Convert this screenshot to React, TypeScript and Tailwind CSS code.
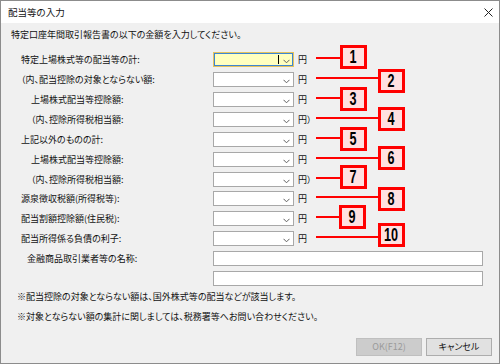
import React from "react";

const FONT = "[font-family:'Noto_Sans_CJK_JP','Noto_Sans',sans-serif] [font-feature-settings:'palt']";

type Row = { label: string; indent: 0 | 1; unit: string; h: string };

const rows: Row[] = [
  { label: "特定上場株式等の配当等の計:", indent: 0, unit: "円", h: "h-[20px]" },
  { label: "（内、配当控除の対象とならない額:", indent: 0, unit: "円", h: "h-[20px]" },
  { label: "上場株式配当等控除額:", indent: 1, unit: "円", h: "h-[20px]" },
  { label: "（内、控除所得税相当額:", indent: 1, unit: "円）", h: "h-[20px]" },
  { label: "上記以外のものの計:", indent: 0, unit: "円", h: "h-[20px]" },
  { label: "上場株式配当等控除額:", indent: 1, unit: "円", h: "h-[20px]" },
  { label: "（内、控除所得税相当額:", indent: 1, unit: "円）", h: "h-[19px]" },
  { label: "源泉徴収税額(所得税等):", indent: 0, unit: "円", h: "h-[20px]" },
  { label: "配当割額控除額(住民税):", indent: 0, unit: "円", h: "h-[20px]" },
  { label: "配当所得係る負債の利子:", indent: 0, unit: "円", h: "h-[20px]" },
];

const rowTops = [52, 72, 92, 112, 132, 152, 172, 191, 211, 231];
const boxes = [
  { n: "1", x: 340, y: 45 },
  { n: "2", x: 378, y: 69 },
  { n: "3", x: 340, y: 87 },
  { n: "4", x: 378, y: 107 },
  { n: "5", x: 340, y: 127 },
  { n: "6", x: 378, y: 146 },
  { n: "7", x: 340, y: 165 },
  { n: "8", x: 378, y: 187 },
  { n: "9", x: 339, y: 205 },
  { n: "10", x: 378, y: 223 },
];

function Chevron() {
  return (
    <svg width="7" height="5" viewBox="0 0 7 5" className="absolute right-[3px] top-[6px]">
      <polyline points="0.5,0.8 3.5,3.8 6.5,0.8" fill="none" stroke="#606060" strokeWidth="1" />
    </svg>
  );
}

function Combo({ focused }: { focused?: boolean }) {
  if (focused) {
    return (
      <div className="relative w-[81px] h-[15px] bg-[#ffffc0] border border-[#e6c35c] shadow-[inset_0_0_0_1px_#3d86d4]">
        <div className="absolute left-[64px] top-[2px] w-px h-[9px] bg-black" />
        <Chevron />
      </div>
    );
  }
  return (
    <div className="relative w-[81px] h-[15px] bg-white border border-[#a8a8a8]">
      <Chevron />
    </div>
  );
}

export default function App() {
  return (
    <div className={`relative w-[500px] h-[364px] ${FONT} text-[9px] text-[#111]`}>
      <div className="w-[500px] h-[364px] flex flex-col border border-[#8c8c8c] bg-white">
        {/* title bar */}
        <div className="h-[22px] flex items-center justify-between pl-[7px] pr-[6px] bg-white">
          <span className="text-[9.5px] leading-[14px]">配当等の入力</span>
          <svg width="9" height="9" viewBox="0 0 9 9">
            <line x1="0.5" y1="0.5" x2="8.5" y2="8.5" stroke="#222" strokeWidth="1" />
            <line x1="8.5" y1="0.5" x2="0.5" y2="8.5" stroke="#222" strokeWidth="1" />
          </svg>
        </div>
        {/* body */}
        <div className="flex-1 flex flex-col bg-[#f0f0f0] pl-[10px] pr-[7px] pt-[5px] pb-[7px]">
          <div className="leading-[14px] h-[14px]">特定口座年間取引報告書の以下の金額を入力してください。</div>
          <div className="mt-[10px] flex flex-col">
            {rows.map((r, i) => (
              <div key={i} className={`flex items-start ${r.h}`}>
                <div className={`w-[202px] leading-[15px] ${r.indent === 1 ? "pl-[20px]" : "pl-[10px]"}`}>{r.label}</div>
                <Combo focused={i === 0} />
                <span className="ml-[4px] leading-[15px]">{r.unit}</span>
              </div>
            ))}
            <div className="flex items-start h-[20px]">
              <div className="w-[202px] leading-[15px] pl-[16px]">金融商品取引業者等の名称:</div>
              <div className="w-[270px] h-[15px] bg-white border border-[#a8a8a8]" />
            </div>
            <div className="flex items-start h-[15px]">
              <div className="w-[202px]" />
              <div className="w-[270px] h-[15px] bg-white border border-[#a8a8a8]" />
            </div>
          </div>
          <div className="mt-[4px] pl-[6px] leading-[14px]">※配当控除の対象とならない額は、国外株式等の配当などが該当します。</div>
          <div className="mt-[6px] pl-[6px] leading-[14px]">※対象とならない額の集計に関しましては、税務署等へお問い合わせください。</div>
          <div className="mt-auto flex justify-end gap-[4px]">
            <div className="w-[66px] h-[18px] flex items-center justify-center bg-[#cccccc] border border-[#bfbfbf] text-[#9a9a9a]">OK(F12)</div>
            <div className="w-[66px] h-[18px] flex items-center justify-center bg-[#e1e1e1] border border-[#adadad]">キャンセル</div>
          </div>
        </div>
      </div>

      {/* red annotation overlays */}
      {boxes.map((b, i) => (
        <React.Fragment key={i}>
          <div
            className="absolute h-[2px] bg-[#ff0000]"
            style={{ left: 316, top: rowTops[i] + 5, width: b.x - 316 }}
          />
          <div
            className="absolute w-[27px] h-[24px] border-[3px] border-[#ff0000] bg-[#ffe0e0] flex items-center justify-center"
            style={{ left: b.x, top: b.y }}
          >
            <span className="inline-block scale-x-[0.7] text-black font-bold text-[18px] leading-none [font-family:'Liberation_Sans','Arial',sans-serif] [font-feature-settings:normal]">
              {b.n}
            </span>
          </div>
        </React.Fragment>
      ))}
    </div>
  );
}
